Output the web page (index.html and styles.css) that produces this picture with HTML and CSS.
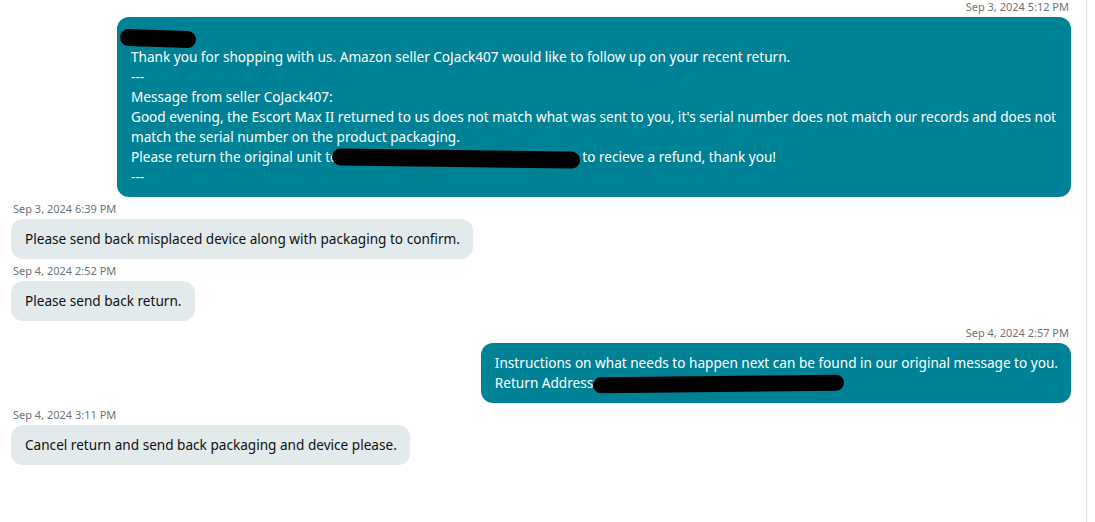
FILE: index.html
```html
<!DOCTYPE html>
<html lang="en">
<head>
<meta charset="utf-8">
<title>Messages</title>
<link rel="stylesheet" href="styles.css">
</head>
<body>
<div class="thread">
  <div class="msg out">
    <div class="time">Sep 3, 2024 5:12 PM</div>
    <div class="bubble wide">
      <span class="redact r1"></span><br>
      Thank you for shopping with us. Amazon seller CoJack407 would like to follow up on your recent return.<br>
      ---<br>
      Message from seller CoJack407:<br>
      Good evening, the Escort Max II returned to us does not match what was sent to you, it's serial number does not match our records and does not match the serial number on the product packaging.<br>
      Please return the original unit to<span class="redact r2"></span>to recieve a refund, thank you!<br>
      ---
    </div>
  </div>
  <div class="msg in">
    <div class="time">Sep 3, 2024 6:39 PM</div>
    <div class="bubble">Please send back misplaced device along with packaging to confirm.</div>
  </div>
  <div class="msg in">
    <div class="time">Sep 4, 2024 2:52 PM</div>
    <div class="bubble">Please send back return.</div>
  </div>
  <div class="msg out">
    <div class="time">Sep 4, 2024 2:57 PM</div>
    <div class="bubble">Instructions on what needs to happen next can be found in our original message to you.<br>Return Address:<span class="redact r3"></span></div>
  </div>
  <div class="msg in">
    <div class="time">Sep 4, 2024 3:11 PM</div>
    <div class="bubble">Cancel return and send back packaging and device please.</div>
  </div>
</div>
</body>
</html>
```

FILE: styles.css
```css
html, body {
  margin: 0;
  padding: 0;
  background: #ffffff;
}
body {
  font-family: "Noto Sans", "Liberation Sans", Arial, sans-serif;
  color: #0f1111;
}
.thread {
  width: 1060px;
  min-height: 522px;
  box-sizing: content-box;
  padding: 0 15px 0 11px;
  border-right: 1px solid #dcdcdc;
  display: flex;
  flex-direction: column;
  gap: 5px;
}
.msg {
  display: flex;
  flex-direction: column;
  gap: 3px;
}
.msg.out { align-items: flex-end; }
.msg.in { align-items: flex-start; }
.time {
  font-size: 11px;
  line-height: 14px;
  color: #6f7373;
  padding: 0 2px;
}
.bubble {
  font-size: 13.6px;
  line-height: 20px;
  padding: 10px 13px 10px 14px;
  border-radius: 12px;
  max-width: 90%;
  box-sizing: border-box;
}
.out .bubble {
  background: #008296;
  color: #ffffff;
}
.in .bubble {
  background: #e3eaeb;
  color: #0f1111;
}
.bubble.wide { width: 954px; }
.redact {
  display: inline-block;
  background: #000;
  border-radius: 10px;
  vertical-align: middle;
}
.r1 {
  width: 76px;
  height: 17px;
  margin-left: -11px;
  transform: rotate(2deg);
}
.r2 {
  width: 248px;
  height: 17px;
  margin-left: -6px;
  margin-right: 2px;
  transform: rotate(0.8deg);
}
.r3 {
  width: 251px;
  height: 16px;
  margin-left: -4px;
  transform: rotate(-0.6deg);
}
```
